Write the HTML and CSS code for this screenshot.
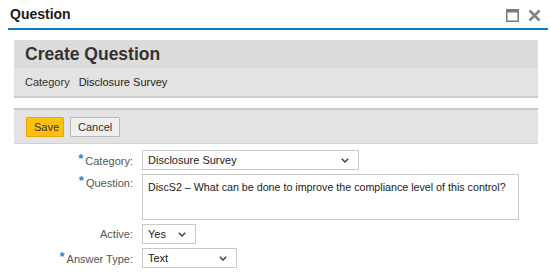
FILE: index.html
```html
<!DOCTYPE html>
<html lang="en">
<head>
  <meta charset="UTF-8">
  <title>Question</title>
  <link rel="stylesheet" href="styles.css">
</head>
<body>
  <!-- Dialog title bar -->
  <header class="dialog-bar">
    <h1>Question</h1>
    <div class="bar-icons">
      <svg class="icon-max" width="13" height="13" viewBox="0 0 13 13">
        <rect x="0.75" y="0.75" width="11.5" height="11.5" fill="none" stroke="#7a7a7a" stroke-width="1.5"/>
        <rect x="0" y="0" width="13" height="3.5" fill="#7a7a7a"/>
      </svg>
      <svg class="icon-close" width="13" height="13" viewBox="0 0 13 13">
        <path d="M1.5 1.5 L11.5 11.5 M11.5 1.5 L1.5 11.5" stroke="#848484" stroke-width="2.6"/>
      </svg>
    </div>
  </header>

  <div class="panel">
    <div class="panel-title">Create Question</div>
    <div class="panel-sub">
      <span class="sub-label">Category</span>
      <span>Disclosure Survey</span>
    </div>
  </div>

  <div class="toolbar">
    <button class="btn btn-save">Save</button>
    <button class="btn">Cancel</button>
  </div>

  <!-- Question form -->
  <div class="form">
    <label class="field-label"><span class="req">*</span>Category:</label>
    <div class="select select-wide">
      <span>Disclosure Survey</span>
      <svg width="8" height="5" viewBox="0 0 8 5"><polyline points="0.8,0.8 4,4 7.2,0.8" fill="none" stroke="#444" stroke-width="1.5"/></svg>
    </div>

    <label class="field-label top"><span class="req">*</span>Question:</label>
    <div class="textarea">DiscS2 – What can be done to improve the compliance level of this control?</div>

    <label class="field-label">Active:</label>
    <div class="select select-small">
      <span>Yes</span>
      <svg width="8" height="5" viewBox="0 0 8 5"><polyline points="0.8,0.8 4,4 7.2,0.8" fill="none" stroke="#444" stroke-width="1.5"/></svg>
    </div>

    <label class="field-label"><span class="req">*</span>Answer Type:</label>
    <div class="select select-mid">
      <span>Text</span>
      <svg width="8" height="5" viewBox="0 0 8 5"><polyline points="0.8,0.8 4,4 7.2,0.8" fill="none" stroke="#444" stroke-width="1.5"/></svg>
    </div>
  </div>
</body>
</html>
```

FILE: styles.css
```css
/* Basic page styles */
body {
  margin: 0;
  padding: 0;
  font-family: "Liberation Sans", Arial, sans-serif;
  font-size: 11px;
  color: #333;
  background-color: #fff;
}

.dialog-bar {
  display: flex;
  align-items: center;
  justify-content: space-between;
  height: 28px;
  margin: 0 2px 0 8px;
  padding: 0 7px 0 2px;
  border-bottom: 2px solid #0b7cc6;
}

.dialog-bar h1 {
  margin: 0;
  font-size: 14px;
  font-weight: bold;
  color: #1a1a1a;
}

.bar-icons {
  display: flex;
  gap: 9px;
  padding-top: 3px;
}

.panel {
  margin: 10px 12px 0 14px;
  border-bottom: 2px solid #cbcbcb;
}

.panel-title {
  height: 28px;
  line-height: 28px;
  padding-left: 11px;
  font-size: 17.5px;
  font-weight: bold;
  color: #333;
  background-color: #dcdcdc;
}

.panel-sub {
  display: flex;
  gap: 9px;
  align-items: center;
  height: 28px;
  padding-left: 11px;
  background-color: #e3e3e3;
  color: #222;
}

.sub-label {
  color: #333;
}

.toolbar {
  display: flex;
  gap: 6px;
  margin: 10px 12px 0 14px;
  padding: 7px 12px 6px;
  background-color: #e3e3e3;
  border-top: 2px solid #cacaca;
  border-bottom: 1px solid #d2d2d2;
}

.btn {
  height: 20px;
  padding: 0 7px;
  font-family: inherit;
  font-size: 11px;
  color: #333;
  background-color: #efefef;
  border: 1px solid #b9b9b9;
  border-radius: 1px;
}

.btn-save {
  width: 38px;
  background-color: #fdc00f;
  border-color: #e9a800;
}

.form {
  display: grid;
  grid-template-columns: 133px auto;
  column-gap: 9px;
  row-gap: 4px;
  margin-top: 6px;
  justify-items: start;
}

.field-label {
  justify-self: end;
  align-self: center;
  color: #555;
}

.field-label.top {
  align-self: start;
  padding-top: 1px;
}

.req {
  position: relative;
  top: -2px;
  margin-right: 2px;
  color: #1d86cc;
  font-size: 13px;
  font-weight: bold;
}

.select {
  display: flex;
  align-items: center;
  justify-content: space-between;
  box-sizing: border-box;
  height: 20px;
  padding: 0 9px 0 5px;
  background-color: #fff;
  border: 1px solid #c9c9c9;
  color: #222;
}

.select-wide {
  width: 217px;
}

.select-small {
  width: 54px;
}

.select-mid {
  width: 95px;
}

.textarea {
  box-sizing: border-box;
  width: 377px;
  height: 46px;
  padding: 6px 4px 6px 5px;
  border: 1px solid #c9c9c9;
  color: #222;
  font-size: 10.7px;
  white-space: nowrap;
  overflow: hidden;
}
```
